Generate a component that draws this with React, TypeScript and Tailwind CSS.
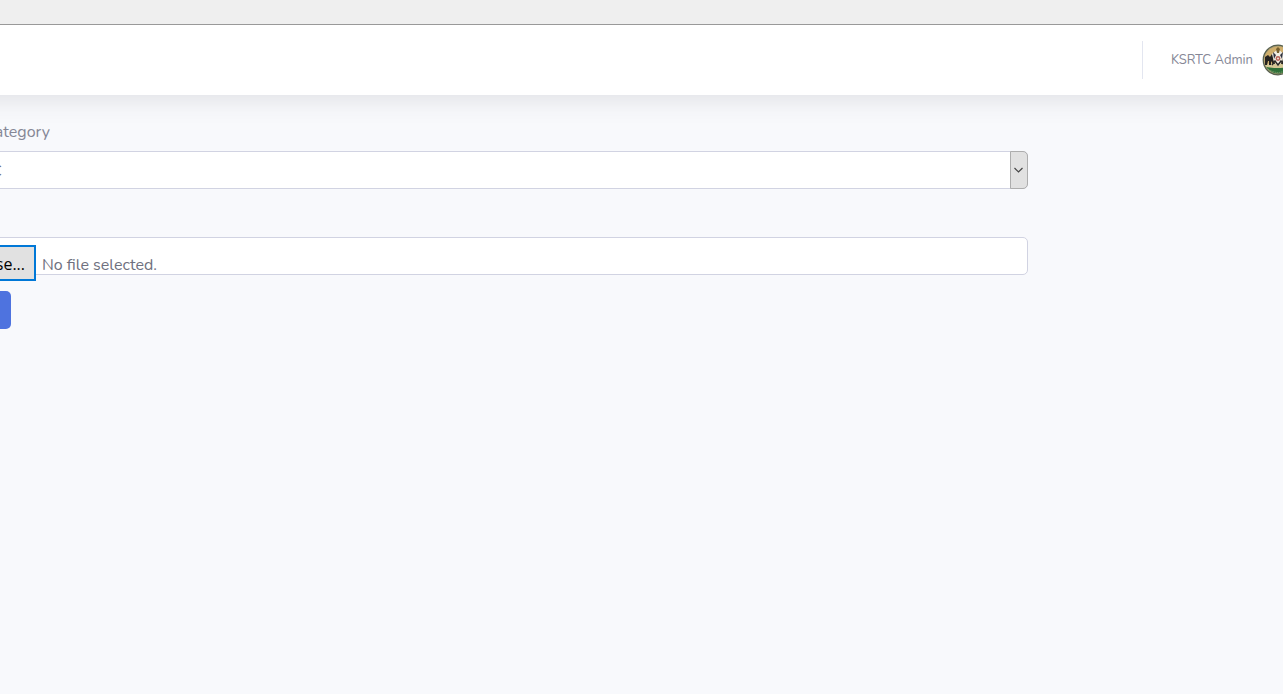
import { useRef, useState } from "react";

function Emblem() {
    return (
        <svg viewBox="0 0 32 32" className="h-8 w-8 shrink-0" aria-hidden="true">
            <defs>
                <clipPath id="disc">
                    <circle cx="16" cy="16" r="13.6" />
                </clipPath>
            </defs>
            <circle cx="16" cy="16" r="15.4" fill="#56604f" />
            <circle cx="16" cy="16" r="14.2" fill="#a79a72" />
            <g clipPath="url(#disc)">
                <rect width="32" height="32" fill="#cfae6c" />
                <path d="M0 21 Q16 17 32 21 V32 H0Z" fill="#d5c795" />
                <path d="M0 22 Q16 26 32 22 V32 H0Z" fill="#2f7038" />
                <path d="M4 27 Q16 32 28 27 V32 H4Z" fill="#35503d" />
            </g>
            <path d="M6 25 Q16 32 26 25" fill="none" stroke="#9fae8a" strokeWidth="0.8" strokeDasharray="1 1" />
            {/* elephants on both sides of the shield */}
            <path
                d="M3 13 L6 11 L8 13 L10 10 L12 11 L11 14 L13 20 H11 L9 17 V21 H7 V17 H6 L5 21 H3Z"
                fill="#25221f"
            />
            <path
                d="M29 13 L26 11 L24 13 L22 10 L20 11 L21 14 L19 20 H21 L23 17 V21 H25 V17 H26 L27 21 H29Z"
                fill="#25221f"
            />
            <path d="M10 10 L16 5 L22 10 L20 18 L16 22 L12 18Z" fill="#f1ede2" />
            <path d="M14 5 L16 3 L18 5 L17 9 H15Z" fill="#77602f" />
            <path d="M11 8 L14 11 L12 15Z M21 8 L18 11 L20 15Z" fill="#303340" />
            <circle cx="16" cy="14.5" r="2.4" fill="#b86057" />
            <circle cx="16" cy="14.5" r="1" fill="#eee4d6" />
            <path d="M10 21 L13 17 L16 21 L19 17 L22 21" fill="none" stroke="#2a2925" strokeWidth="1.4" />
        </svg>
    );
}

function Topbar() {
    return (
        <header className="-mx-8 flex h-[70px] items-center justify-end bg-white px-8 shadow-[0_2px_28px_rgba(58,59,69,0.15)]">
            <div className="mr-7 h-[38px] w-px bg-[#e3e6f0]" />
            <a href="#profile" className="-mr-[11px] flex items-center gap-[9px] text-[13px] text-[#858796]">
                <span className="pt-px">KSRTC Admin</span>
                <Emblem />
            </a>
        </header>
    );
}

export default function App() {
    const fileRef = useRef<HTMLInputElement>(null);
    const [fileName, setFileName] = useState("No file selected.");

    return (
        <div className="min-h-screen overflow-hidden bg-[#f8f9fc] font-['Nunito','Lato',sans-serif] text-base text-[#858796]">
            <div className="relative z-10 h-[25px] border-b border-[#999999] bg-[#efefef]" />
            <Topbar />

            <form className="mr-[255px] pt-[25px]" onSubmit={(e) => e.preventDefault()}>
                <label htmlFor="category" className="-ml-2 flex w-[58px] justify-end leading-6">
                    ategory
                </label>
                <div className="relative -ml-[10px] mt-[7px] h-[38px]">
                    <select
                        id="category"
                        className="h-full w-full appearance-none rounded-[5px] border border-[#d1d3e2] bg-white pt-px text-[#6e707e]"
                    >
                        <option>C</option>
                    </select>
                    <span className="pointer-events-none absolute inset-y-0 right-0 flex w-[18px] items-center justify-center rounded-r-[5px] border border-[#adadad] bg-[#e1e1e1] pr-px">
                        <svg width="9" height="6" viewBox="0 0 9 6" fill="none" stroke="#444" strokeWidth="1.2">
                            <path d="M0.5 1 L4.5 5 L8.5 1" />
                        </svg>
                    </span>
                </div>

                <div className="-ml-2 mt-12 flex h-[38px] items-start rounded-[5px] border border-[#d1d3e2] bg-white pt-[7px] text-[#6e707e]">
                    <button
                        type="button"
                        onClick={() => fileRef.current?.click()}
                        className="flex h-9 w-[43px] shrink-0 items-center justify-end border-2 border-[#0078d7] bg-[#e1e1e1] pr-[9px] pt-px font-['Open_Sans',sans-serif] text-black"
                    >
                        se...
                    </button>
                    <label htmlFor="file" className="ml-[6px] pt-2 leading-6">
                        {fileName}
                    </label>
                    <input
                        ref={fileRef}
                        id="file"
                        type="file"
                        className="sr-only"
                        onChange={(e) => setFileName(e.target.files?.[0]?.name ?? "No file selected.")}
                    />
                </div>

                <button
                    type="submit"
                    aria-label="Submit"
                    className="-ml-2 mt-4 block h-[38px] w-[19px] rounded-[5px] bg-[#4e73df]"
                />
            </form>
        </div>
    );
}
